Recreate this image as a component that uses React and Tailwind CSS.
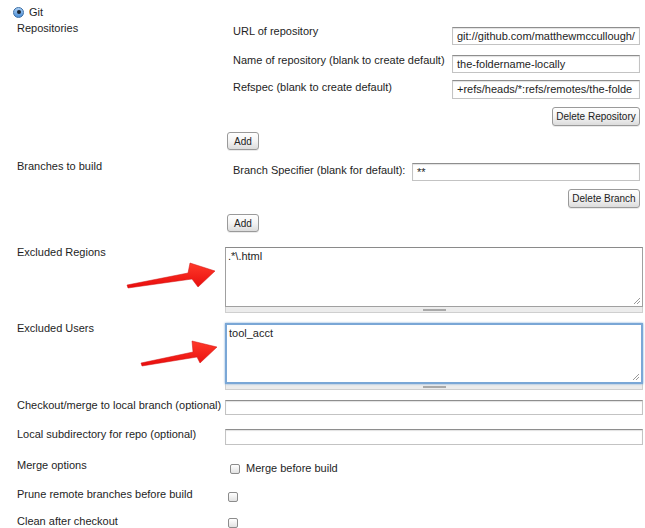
import React from "react";

const Label = ({ children, className = "" }) => (
  <div className={"w-[225px] shrink-0 pl-[17px] leading-[13px] " + className}>{children}</div>
);

const TextInput = ({ value = "", className = "" }) => (
  <div
    className={
      "h-full border border-[#c3c3c3] border-t-[#8e8e8e] bg-white px-[4px] leading-[16px] whitespace-nowrap overflow-hidden shadow-[inset_0_1px_1px_rgba(0,0,0,0.12)] " +
      className
    }
  >
    {value}
  </div>
);

const Button = ({ children, className = "" }) => (
  <div
    className={
      "flex items-center justify-center whitespace-nowrap rounded-[3px] border border-[#9a9a9a] bg-gradient-to-b from-white via-[#f4f4f4] to-[#dcdcdc] text-[10px] text-[#222] shadow-[0_1px_0_rgba(0,0,0,0.08)] " +
      className
    }
  >
    {children}
  </div>
);

const Checkbox = ({ className = "" }) => (
  <div
    className={
      "h-[10px] w-[10px] rounded-[2px] border border-[#8c8c8c] bg-gradient-to-b from-white to-[#e2e2e2] " +
      className
    }
  />
);

const TextArea = ({ value, focused, height }) => (
  <div className="relative w-[418px]">
    <div
      className={
        (focused
          ? "border-2 border-[#7aa7d6] shadow-[0_0_2px_#7aa7d6] "
          : "border border-[#a0a0a0] border-t-[#8a8a8a] ") +
        "relative bg-white px-[2px] pt-[1px] leading-[14px] " +
        height
      }
    >
      {value}
      <svg className="absolute bottom-[1px] right-[1px]" width="8" height="8" viewBox="0 0 8 8">
        <path d="M7 1 L1 7 M7 4 L4 7" stroke="#9a9a9a" strokeWidth="1" />
      </svg>
    </div>
    <div className="flex h-[6px] items-center justify-center border-b border-x border-[#cfcfcf] bg-[#ececec]">
      <div className="h-[2px] w-[23px] bg-[#a9a9a9]" />
    </div>
  </div>
);

const App = () => {
  return (
    <div className="relative h-[528px] w-[645px] overflow-hidden bg-white text-[11px] text-[#1e1e1e] [font-family:'Liberation_Sans',Arial,sans-serif]">
      {/* Git radio */}
      <div className="flex h-[14px] items-center pl-[13px] mt-[5px]">
        <div className="flex h-[11px] w-[11px] items-center justify-center rounded-full border border-[#3a6ea5] bg-gradient-to-b from-[#a9cdf2] to-[#4b8fd6]">
          <div className="h-[4px] w-[4px] rounded-full bg-[#1b2633]" />
        </div>
        <span className="ml-[5px]">Git</span>
      </div>

      {/* Repositories */}
      <div className="flex">
        <Label className="pt-[3px]">Repositories</Label>
        <div className="flex-1">
          <div className="mt-[8px] flex h-[18px]">
            <div className="w-[227px] pl-[8px] leading-[13px] -mt-[2px]">URL of repository</div>
            <div className="w-[188px]">
              <TextInput value="git://github.com/matthewmccullough/" />
            </div>
          </div>
          <div className="mt-[10px] flex h-[18px]">
            <div className="w-[227px] pl-[8px] leading-[13px] -mt-[1px] whitespace-nowrap">
              Name of repository (blank to create default)
            </div>
            <div className="w-[188px]">
              <TextInput value="the-foldername-locally" />
            </div>
          </div>
          <div className="mt-[7px] flex h-[19px]">
            <div className="w-[227px] pl-[8px] leading-[13px] pt-[1px]">Refspec (blank to create default)</div>
            <div className="w-[188px]">
              <TextInput value="+refs/heads/*:refs/remotes/the-folde" />
            </div>
          </div>
          <div className="mt-[8px] flex h-[19px] justify-end pr-[5px]">
            <Button className="w-[88px]">Delete Repository</Button>
          </div>
          <div className="mt-[6px] flex h-[18px] pl-[2px]">
            <Button className="w-[32px]">Add</Button>
          </div>
        </div>
      </div>

      {/* Branches */}
      <div className="flex">
        <Label className="pt-[10px]">Branches to build</Label>
        <div className="flex-1">
          <div className="mt-[13px] flex h-[18px]">
            <div className="w-[187px] pl-[8px] leading-[13px] pt-[1px] whitespace-nowrap">
              Branch Specifier (blank for default):
            </div>
            <div className="w-[228px]">
              <TextInput value="**" />
            </div>
          </div>
          <div className="mt-[8px] flex h-[19px] justify-end pr-[5px]">
            <Button className="w-[72px]">Delete Branch</Button>
          </div>
          <div className="mt-[6px] flex h-[18px] pl-[2px]">
            <Button className="w-[32px]">Add</Button>
          </div>
        </div>
      </div>

      {/* Excluded Regions */}
      <div className="mt-[15px] flex">
        <Label className="-mt-[1px]">Excluded Regions</Label>
        <TextArea value=".*\.html" height="h-[60px]" />
      </div>

      {/* Excluded Users */}
      <div className="mt-[10px] flex">
        <Label className="-mt-[1px]">Excluded Users</Label>
        <TextArea value="tool_acct" focused height="h-[61px]" />
      </div>

      {/* Checkout/merge */}
      <div className="mt-[10px] flex h-[15px]">
        <Label className="-mt-[1px] whitespace-nowrap">Checkout/merge to local branch (optional)</Label>
        <div className="w-[418px]">
          <TextInput />
        </div>
      </div>

      {/* Local subdirectory */}
      <div className="mt-[14px] flex h-[16px]">
        <Label className="-mt-[1px]">Local subdirectory for repo (optional)</Label>
        <div className="w-[418px]">
          <TextInput />
        </div>
      </div>

      {/* Merge options */}
      <div className="mt-[14px] flex">
        <Label>Merge options</Label>
        <div className="ml-[5px] mt-[3px] flex items-center">
          <Checkbox />
          <span className="ml-[6px] leading-[13px]">Merge before build</span>
        </div>
      </div>

      {/* Prune */}
      <div className="mt-[13px] flex">
        <Label>Prune remote branches before build</Label>
        <Checkbox className="ml-[3px] mt-[4px]" />
      </div>

      {/* Clean */}
      <div className="mt-[13px] flex">
        <Label>Clean after checkout</Label>
        <Checkbox className="ml-[3px] mt-[3px]" />
      </div>

      {/* annotation arrows */}
      <svg className="pointer-events-none absolute left-0 top-0" width="645" height="528" viewBox="0 0 645 528">
        <defs>
          <linearGradient id="red" x1="0" y1="0" x2="0" y2="1">
            <stop offset="0" stopColor="#ff3a2a" />
            <stop offset="1" stopColor="#e80c0c" />
          </linearGradient>
        </defs>
        <g fill="url(#red)" stroke="#d01010" strokeWidth="0.5" strokeLinejoin="round">
          <polygon points="127,285 188,273 190,263 215,271 198,287 192,279 128,288" />
          <polygon points="141,363 193,352 192,341 217,347 200,363 197,357 142,366" />
        </g>
      </svg>
    </div>
  );
};

export default App;
